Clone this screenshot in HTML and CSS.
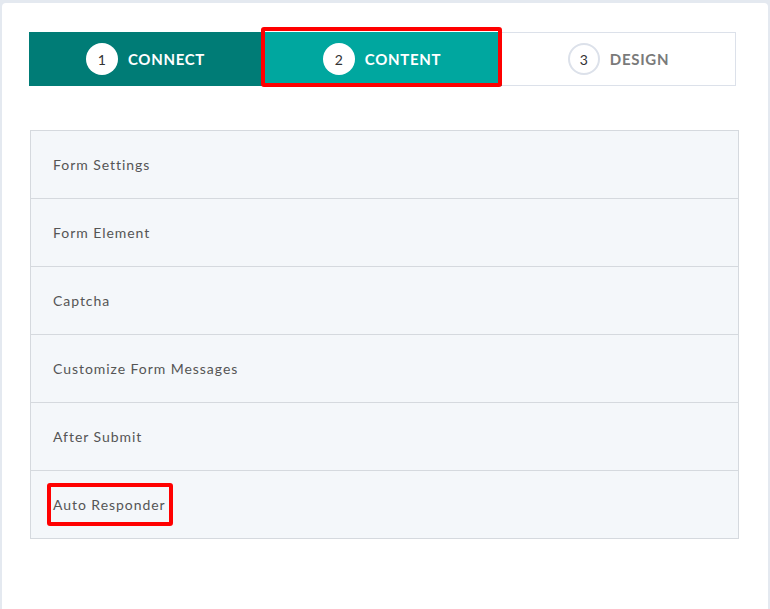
FILE: index.html
```html
<!DOCTYPE html>
<html>
<head>
<meta charset="utf-8">
<link rel="stylesheet" href="styles.css">
</head>
<body>
<div class="card">
  <div class="steps">
    <div class="step step-done"><span class="num">1</span><span class="label">CONNECT</span></div>
    <div class="step step-active marked"><span class="num">2</span><span class="label">CONTENT</span></div>
    <div class="step step-todo"><span class="num">3</span><span class="label">DESIGN</span></div>
  </div>
  <div class="sections">
    <div class="row"><span class="txt">Form Settings</span></div>
    <div class="row"><span class="txt">Form Element</span></div>
    <div class="row"><span class="txt">Captcha</span></div>
    <div class="row"><span class="txt">Customize Form Messages</span></div>
    <div class="row"><span class="txt">After Submit</span></div>
    <div class="row"><span class="txt marked-text">Auto Responder</span></div>
  </div>
</div>
</body>
</html>
```

FILE: styles.css
```css
html, body {
  margin: 0;
  padding: 0;
}
body {
  background: #e4e9f0;
  font-family: Lato, "Open Sans", sans-serif;
  height: 609px;
  overflow: hidden;
}
.card {
  margin: 3px 2px 0 2px;
  height: 620px;
  background: #ffffff;
  border-radius: 4px;
  padding: 29px 0 0 27px;
  box-sizing: border-box;
}
.steps {
  display: flex;
  width: 707px;
  height: 54px;
}
.step {
  display: flex;
  align-items: center;
  justify-content: center;
  gap: 10px;
  box-sizing: border-box;
  font-weight: 700;
  font-size: 15px;
  letter-spacing: 0.7px;
  position: relative;
}
.step-done {
  width: 233px;
  background: #007c76;
  color: #ffffff;
}
.step-active {
  width: 240px;
  background: #00a79f;
  color: #ffffff;
}
.step-todo {
  width: 234px;
  background: #ffffff;
  color: #7a7a7a;
  border: 1px solid #dce1ea;
  border-left: none;
}
.num {
  width: 32px;
  height: 32px;
  border-radius: 50%;
  background: #ffffff;
  color: #333333;
  display: flex;
  align-items: center;
  justify-content: center;
  font-weight: 400;
  font-size: 14px;
  letter-spacing: 0;
  box-sizing: border-box;
}
.step-todo .num {
  border: 2px solid #dce1ea;
}
.marked::after {
  content: "";
  position: absolute;
  top: -5px;
  left: -1px;
  right: 0;
  bottom: -1px;
  border: 4px solid #ff0000;
  border-radius: 3px;
}
.sections {
  margin: 44px 0 0 1px;
  width: 709px;
  border: 1px solid #d5d9de;
  box-sizing: border-box;
  background: #f4f7fa;
}
.row {
  height: 67px;
  display: flex;
  align-items: center;
  padding-left: 22px;
  border-top: 1px solid #d5d9de;
}
.row:first-child {
  border-top: none;
}
.txt {
  font-size: 14px;
  line-height: 17px;
  color: #555555;
  letter-spacing: 0.95px;
  position: relative;
}
.marked-text::after {
  content: "";
  position: absolute;
  top: -13px;
  bottom: -13px;
  left: -6px;
  right: -7px;
  border: 4px solid #ff0000;
  border-radius: 3px;
}
```
